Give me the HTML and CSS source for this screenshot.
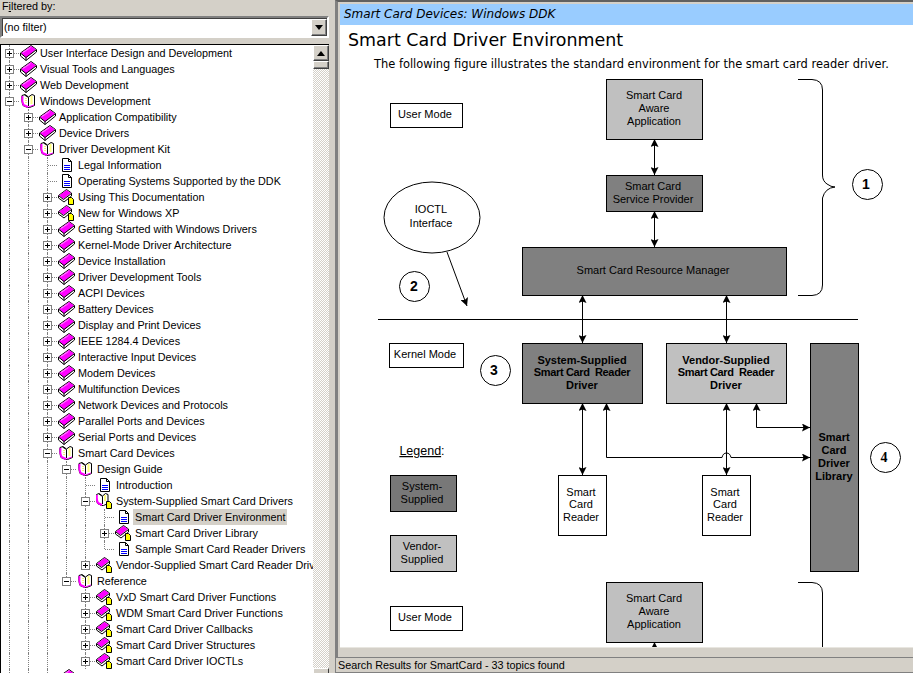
FILE: index.html
```html
<!DOCTYPE html>
<html lang="en">
<head>
<meta charset="utf-8">
<title>Smart Card Driver Environment</title>
<link rel="stylesheet" href="styles.css">
</head>
<body>
<svg class="defs" width="0" height="0" aria-hidden="true">
  <symbol id="book" viewBox="0 0 17 16">
    <path d="M0.500 8 11 0.500 16.500 4.500V7L6 15.500 0.500 11z" fill="#fff" stroke="#000"/>
    <path d="M1 8 11 1l5 3.500L6 13z" fill="#f0f"/>
    <path d="M1 8.500 6 12.500 16 5M6 12.500v3" fill="none" stroke="#000"/>
    <path d="M3 7.500 10.500 2.500" stroke="#ff8cff"/>
  </symbol>
  <symbol id="bookp" viewBox="0 0 17 16">
    <path d="M0.500 6.500 8.500 0.500 13.500 4V7L6 13 0.500 9z" fill="#fff" stroke="#000"/>
    <path d="M1 6.500 8.500 1 13 4 5.500 10z" fill="#f0f"/>
    <path d="M1 7 5.500 10.500 13.500 4.500" fill="none" stroke="#000"/>
    <path d="M10.500 8.500h3l2 2v5h-5z" fill="#ff0" stroke="#000"/>
  </symbol>
  <symbol id="open" viewBox="0 0 17 16">
    <path d="M2 2.500C1.500 6 2 10 3 12.500L7.500 14.500H9.500L14.500 12.500V2.500L12 1.500 8.500 4 5 1.500z" fill="#fff" stroke="#000"/>
    <path d="M2.500 3C2 6 2.500 10 3.500 12L8 14" fill="none" stroke="#f0f" stroke-width="2"/>
    <path d="M8.500 14 14 12" fill="none" stroke="#f0f"/>
    <path d="M4.500 2 8.500 4.500V13" fill="none" stroke="#000"/>
    <path d="M11.500 3.500v8" stroke="#ff0" stroke-width="2" stroke-dasharray="1 1"/>
    <path d="M6 5v6" stroke="#e8e800" stroke-dasharray="1 1"/>
  </symbol>
  <symbol id="openp" viewBox="0 0 17 16">
    <path d="M0.500 1.500C0 5 0.500 8 1.500 10.500L5.500 12.500H7.500L12 10.500V1.500L9.500 0.500 6.500 3 3 0.500z" fill="#fff" stroke="#000"/>
    <path d="M1 2C0.500 5 1 8 2 10L6 12" fill="none" stroke="#f0f" stroke-width="2"/>
    <path d="M3 1 6.500 3.500V11" fill="none" stroke="#000"/>
    <path d="M9 2.500v6" stroke="#ff0" stroke-width="2" stroke-dasharray="1 1"/>
    <path d="M10.500 8.500h3l2 2v5h-5z" fill="#ff0" stroke="#000"/>
  </symbol>
  <symbol id="doc" viewBox="0 0 17 16">
    <path d="M4.500 1.500h6l3 3v10h-9z" fill="#fff" stroke="#000"/>
    <path d="M10.500 1.500v3h3" fill="none" stroke="#000"/>
    <path d="M6 8.500h6M6 10.500h6M6 12.500h6" stroke="#00f"/>
  </symbol>
  <marker id="a" viewBox="0 0 8 8" refX="8" refY="4" markerWidth="8" markerHeight="8" markerUnits="userSpaceOnUse" orient="auto-start-reverse">
    <path d="M0 0 8 4 0 8 1.500 4z"/>
  </marker>
</svg>

<div class="app">
  <aside class="side">
    <div class="filter-label">F<u>i</u>ltered by:</div>
    <div class="combo">
      <span class="combo-value">(no filter)</span>
      <span class="btn combo-btn"><span class="tri-down"></span></span>
    </div>
    <div class="tree-panel">
      <ul class="tree">
        <li class="row"><span class="c t"><span class="box plus"></span></span><svg class="ic"><use href="#book"/></svg><span class="lb">User Interface Design and Development</span></li>
        <li class="row"><span class="c t"><span class="box plus"></span></span><svg class="ic"><use href="#book"/></svg><span class="lb">Visual Tools and Languages</span></li>
        <li class="row"><span class="c t"><span class="box plus"></span></span><svg class="ic"><use href="#book"/></svg><span class="lb">Web Development</span></li>
        <li class="row"><span class="c t"><span class="box minus"></span></span><svg class="ic"><use href="#open"/></svg><span class="lb">Windows Development</span></li>
        <li class="row"><span class="c g"></span><span class="c t"><span class="box plus"></span></span><svg class="ic"><use href="#book"/></svg><span class="lb">Application Compatibility</span></li>
        <li class="row"><span class="c g"></span><span class="c t"><span class="box plus"></span></span><svg class="ic"><use href="#book"/></svg><span class="lb">Device Drivers</span></li>
        <li class="row"><span class="c g"></span><span class="c t"><span class="box minus"></span></span><svg class="ic"><use href="#open"/></svg><span class="lb">Driver Development Kit</span></li>
        <li class="row"><span class="c g"></span><span class="c g"></span><span class="c t"></span><svg class="ic"><use href="#doc"/></svg><span class="lb">Legal Information</span></li>
        <li class="row"><span class="c g"></span><span class="c g"></span><span class="c t"></span><svg class="ic"><use href="#doc"/></svg><span class="lb">Operating Systems Supported by the DDK</span></li>
        <li class="row"><span class="c g"></span><span class="c g"></span><span class="c t"><span class="box plus"></span></span><svg class="ic"><use href="#bookp"/></svg><span class="lb">Using This Documentation</span></li>
        <li class="row"><span class="c g"></span><span class="c g"></span><span class="c t"><span class="box plus"></span></span><svg class="ic"><use href="#bookp"/></svg><span class="lb">New for Windows XP</span></li>
        <li class="row"><span class="c g"></span><span class="c g"></span><span class="c t"><span class="box plus"></span></span><svg class="ic"><use href="#book"/></svg><span class="lb">Getting Started with Windows Drivers</span></li>
        <li class="row"><span class="c g"></span><span class="c g"></span><span class="c t"><span class="box plus"></span></span><svg class="ic"><use href="#book"/></svg><span class="lb">Kernel-Mode Driver Architecture</span></li>
        <li class="row"><span class="c g"></span><span class="c g"></span><span class="c t"><span class="box plus"></span></span><svg class="ic"><use href="#book"/></svg><span class="lb">Device Installation</span></li>
        <li class="row"><span class="c g"></span><span class="c g"></span><span class="c t"><span class="box plus"></span></span><svg class="ic"><use href="#book"/></svg><span class="lb">Driver Development Tools</span></li>
        <li class="row"><span class="c g"></span><span class="c g"></span><span class="c t"><span class="box plus"></span></span><svg class="ic"><use href="#book"/></svg><span class="lb">ACPI Devices</span></li>
        <li class="row"><span class="c g"></span><span class="c g"></span><span class="c t"><span class="box plus"></span></span><svg class="ic"><use href="#book"/></svg><span class="lb">Battery Devices</span></li>
        <li class="row"><span class="c g"></span><span class="c g"></span><span class="c t"><span class="box plus"></span></span><svg class="ic"><use href="#book"/></svg><span class="lb">Display and Print Devices</span></li>
        <li class="row"><span class="c g"></span><span class="c g"></span><span class="c t"><span class="box plus"></span></span><svg class="ic"><use href="#book"/></svg><span class="lb">IEEE 1284.4 Devices</span></li>
        <li class="row"><span class="c g"></span><span class="c g"></span><span class="c t"><span class="box plus"></span></span><svg class="ic"><use href="#book"/></svg><span class="lb">Interactive Input Devices</span></li>
        <li class="row"><span class="c g"></span><span class="c g"></span><span class="c t"><span class="box plus"></span></span><svg class="ic"><use href="#book"/></svg><span class="lb">Modem Devices</span></li>
        <li class="row"><span class="c g"></span><span class="c g"></span><span class="c t"><span class="box plus"></span></span><svg class="ic"><use href="#book"/></svg><span class="lb">Multifunction Devices</span></li>
        <li class="row"><span class="c g"></span><span class="c g"></span><span class="c t"><span class="box plus"></span></span><svg class="ic"><use href="#book"/></svg><span class="lb">Network Devices and Protocols</span></li>
        <li class="row"><span class="c g"></span><span class="c g"></span><span class="c t"><span class="box plus"></span></span><svg class="ic"><use href="#book"/></svg><span class="lb">Parallel Ports and Devices</span></li>
        <li class="row"><span class="c g"></span><span class="c g"></span><span class="c t"><span class="box plus"></span></span><svg class="ic"><use href="#book"/></svg><span class="lb">Serial Ports and Devices</span></li>
        <li class="row"><span class="c g"></span><span class="c g"></span><span class="c t"><span class="box minus"></span></span><svg class="ic"><use href="#open"/></svg><span class="lb">Smart Card Devices</span></li>
        <li class="row"><span class="c g"></span><span class="c g"></span><span class="c g"></span><span class="c t"><span class="box minus"></span></span><svg class="ic"><use href="#open"/></svg><span class="lb">Design Guide</span></li>
        <li class="row"><span class="c g"></span><span class="c g"></span><span class="c g"></span><span class="c g"></span><span class="c t"></span><svg class="ic"><use href="#doc"/></svg><span class="lb">Introduction</span></li>
        <li class="row"><span class="c g"></span><span class="c g"></span><span class="c g"></span><span class="c g"></span><span class="c t"><span class="box minus"></span></span><svg class="ic"><use href="#openp"/></svg><span class="lb">System-Supplied Smart Card Drivers</span></li>
        <li class="row"><span class="c g"></span><span class="c g"></span><span class="c g"></span><span class="c g"></span><span class="c g"></span><span class="c t"></span><svg class="ic"><use href="#doc"/></svg><span class="lb sel">Smart Card Driver Environment</span></li>
        <li class="row"><span class="c g"></span><span class="c g"></span><span class="c g"></span><span class="c g"></span><span class="c g"></span><span class="c t"><span class="box plus"></span></span><svg class="ic"><use href="#bookp"/></svg><span class="lb">Smart Card Driver Library</span></li>
        <li class="row"><span class="c g"></span><span class="c g"></span><span class="c g"></span><span class="c g"></span><span class="c g"></span><span class="c l"></span><svg class="ic"><use href="#doc"/></svg><span class="lb">Sample Smart Card Reader Drivers</span></li>
        <li class="row"><span class="c g"></span><span class="c g"></span><span class="c g"></span><span class="c g"></span><span class="c l"><span class="box plus"></span></span><svg class="ic"><use href="#bookp"/></svg><span class="lb">Vendor-Supplied Smart Card Reader Drivers</span></li>
        <li class="row"><span class="c g"></span><span class="c g"></span><span class="c g"></span><span class="c l"><span class="box minus"></span></span><svg class="ic"><use href="#open"/></svg><span class="lb">Reference</span></li>
        <li class="row"><span class="c g"></span><span class="c g"></span><span class="c g"></span><span class="c"></span><span class="c t"><span class="box plus"></span></span><svg class="ic"><use href="#bookp"/></svg><span class="lb">VxD Smart Card Driver Functions</span></li>
        <li class="row"><span class="c g"></span><span class="c g"></span><span class="c g"></span><span class="c"></span><span class="c t"><span class="box plus"></span></span><svg class="ic"><use href="#bookp"/></svg><span class="lb">WDM Smart Card Driver Functions</span></li>
        <li class="row"><span class="c g"></span><span class="c g"></span><span class="c g"></span><span class="c"></span><span class="c t"><span class="box plus"></span></span><svg class="ic"><use href="#bookp"/></svg><span class="lb">Smart Card Driver Callbacks</span></li>
        <li class="row"><span class="c g"></span><span class="c g"></span><span class="c g"></span><span class="c"></span><span class="c t"><span class="box plus"></span></span><svg class="ic"><use href="#bookp"/></svg><span class="lb">Smart Card Driver Structures</span></li>
        <li class="row"><span class="c g"></span><span class="c g"></span><span class="c g"></span><span class="c"></span><span class="c t"><span class="box plus"></span></span><svg class="ic"><use href="#bookp"/></svg><span class="lb">Smart Card Driver IOCTLs</span></li>
        <li class="row"><span class="c g"></span><span class="c g"></span><span class="c t"><span class="box plus"></span></span><svg class="ic"><use href="#book"/></svg><span class="lb">Still Image Devices</span></li>
      </ul>
      <div class="scrollbar">
        <span class="btn sb-up"><span class="tri-up"></span></span>
        <span class="btn sb-thumb"></span>
        <span class="sb-track"></span>
        <span class="btn sb-down"></span>
      </div>
    </div>
  </aside>

  <main class="main">
    <div class="frame">
      <div class="pane">
        <div class="banner">Smart Card Devices: Windows DDK</div>
        <h1 class="title">Smart Card Driver Environment</h1>
        <p class="intro">The following figure illustrates the standard environment for the smart card reader driver.</p>
        <svg class="diagram" viewBox="370 75 543 572" width="543" height="572">
          <g class="lines">
            <line x1="654.500" y1="139" x2="654.500" y2="175" marker-start="url(#a)" marker-end="url(#a)"/>
            <line x1="654.500" y1="211" x2="654.500" y2="247" marker-start="url(#a)" marker-end="url(#a)"/>
            <line x1="582.500" y1="295" x2="582.500" y2="343" marker-start="url(#a)" marker-end="url(#a)"/>
            <line x1="726.500" y1="295" x2="726.500" y2="343" marker-start="url(#a)" marker-end="url(#a)"/>
            <line x1="582.500" y1="403" x2="582.500" y2="475" marker-start="url(#a)" marker-end="url(#a)"/>
            <line x1="726.500" y1="403" x2="726.500" y2="475" marker-start="url(#a)" marker-end="url(#a)"/>
            <path d="M606.500 403V457.500H722Q723 453 726.500 453T731 457.500H810" marker-start="url(#a)" marker-end="url(#a)"/>
            <path d="M756.500 403V427.500H810" marker-start="url(#a)" marker-end="url(#a)"/>
            <line x1="654.500" y1="642" x2="654.500" y2="660" marker-start="url(#a)"/>
            <line x1="447" y1="252" x2="467" y2="306" marker-end="url(#a)"/>
            <line x1="378" y1="319.500" x2="858" y2="319.500"/>
            <path d="M798 79.500H812Q822.500 80 822.500 90V175Q822.500 181 827 184Q831 187 835 187Q825 188 822.500 198V285Q822.500 295 812 295.500H798"/>
            <path d="M798 582.500H812Q822.500 583 822.500 593V660"/>
          </g>
          <g class="shapes">
            <rect class="white" x="390.500" y="103.500" width="72" height="24"/>
            <rect class="light" x="606.500" y="79.500" width="96" height="60"/>
            <rect class="dark" x="606.500" y="175.500" width="96" height="36"/>
            <rect class="dark" x="522.500" y="247.500" width="264" height="48"/>
            <rect class="white" x="389.500" y="343.500" width="74" height="24"/>
            <rect class="dark" x="522.500" y="343.500" width="120" height="60"/>
            <rect class="light" x="666.500" y="343.500" width="120" height="60"/>
            <rect class="dark" x="810.500" y="343.500" width="48" height="228"/>
            <rect class="white" x="558.500" y="475.500" width="48" height="60"/>
            <rect class="white" x="702.500" y="475.500" width="48" height="60"/>
            <rect class="legend-dark" x="390.500" y="475.500" width="66" height="36"/>
            <rect class="light" x="390.500" y="535.500" width="66" height="36"/>
            <rect class="white" x="390.500" y="606.500" width="72" height="24"/>
            <rect class="light" x="606.500" y="582.500" width="96" height="60"/>
            <ellipse class="white" cx="432" cy="217.500" rx="48" ry="35.500"/>
            <circle class="white" cx="414.500" cy="286.500" r="15"/>
            <circle class="white" cx="495.500" cy="370.500" r="15"/>
            <circle class="white" cx="867.500" cy="184.500" r="15"/>
            <circle class="white" cx="885.500" cy="457.500" r="15"/>
          </g>
          <g class="labels">
            <text x="425" y="118">User Mode</text>
            <text x="654" y="99">Smart Card</text>
            <text x="654" y="112">Aware</text>
            <text x="654" y="125">Application</text>
            <text x="653" y="190">Smart Card</text>
            <text x="653" y="203">Service Provider</text>
            <text x="653" y="274">Smart Card Resource Manager</text>
            <text x="431" y="213">IOCTL</text>
            <text x="431" y="227">Interface</text>
            <text x="425" y="358">Kernel Mode</text>
            <text class="b" x="582" y="364">System-Supplied</text>
            <text class="b tight" x="582" y="376">Smart Card  Reader</text>
            <text class="b" x="582" y="389">Driver</text>
            <text class="b" x="726" y="364">Vendor-Supplied</text>
            <text class="b tight" x="726" y="376">Smart Card  Reader</text>
            <text class="b" x="726" y="389">Driver</text>
            <text class="b" x="834" y="441">Smart</text>
            <text class="b" x="834" y="454">Card</text>
            <text class="b" x="834" y="467">Driver</text>
            <text class="b" x="834" y="480">Library</text>
            <text x="581" y="496">Smart</text>
            <text x="581" y="508">Card</text>
            <text x="581" y="521">Reader</text>
            <text x="725" y="496">Smart</text>
            <text x="725" y="508">Card</text>
            <text x="725" y="521">Reader</text>
            <text class="legend" x="422" y="455"><tspan class="u">Legend</tspan>:</text>
            <text x="422" y="490">System-</text>
            <text x="422" y="503">Supplied</text>
            <text x="422" y="550">Vendor-</text>
            <text x="422" y="563">Supplied</text>
            <text x="425" y="621">User Mode</text>
            <text x="654" y="602">Smart Card</text>
            <text x="654" y="615">Aware</text>
            <text x="654" y="628">Application</text>
            <text class="n" x="414" y="291">2</text>
            <text class="n" x="494" y="375">3</text>
            <text class="n" x="866" y="189">1</text>
            <text class="n s" x="884" y="462">4</text>
          </g>
        </svg>
      </div>
    </div>
    <div class="status">Search Results for SmartCard - 33 topics found</div>
  </main>
</div>
</body>
</html>
```
FILE: styles.css
```css
html, body { margin: 0; padding: 0; height: 100%; overflow: hidden; }
body { background: #d4d0c8; font: 10.800px/16px "Liberation Sans", Arial, sans-serif; color: #000; }
.defs { position: absolute; }
.app { display: flex; height: 673px; overflow: hidden; }

/* Left panel */
.side { width: 335px; flex: none; padding-right: 6px; box-sizing: border-box; display: flex; flex-direction: column; }
.filter-label { height: 16px; line-height: 12px; padding-left: 2px; }
.combo { height: 22px; box-sizing: border-box; display: flex; align-items: center; background: #fff; border: 2px solid; border-color: #808080 #fff #fff #808080; box-shadow: inset 1px 1px 0 #404040; }
.combo-value { flex: 1; padding-left: 2px; }
.btn { display: flex; align-items: center; justify-content: center; box-sizing: border-box; background: #d4d0c8; border: 1px solid; border-color: #fff #404040 #404040 #fff; box-shadow: inset -1px -1px 0 #808080; }
.combo-btn { width: 16px; height: 17px; flex: none; }
.tri-down { border: 4px solid transparent; border-top: 5px solid #000; border-bottom: 0; }
.tri-up { border: 4px solid transparent; border-bottom: 5px solid #000; border-top: 0; }

.tree-panel { margin-top: 6px; flex: 1; min-height: 0; display: flex; background: #fff; border-top: 1px solid #000; border-left: 1px solid #000; }
.tree { flex: 1; min-width: 0; margin: 0 0 0 -1px; padding: 0; list-style: none; overflow: hidden; }
.row { display: flex; height: 16px; white-space: nowrap; }
.c { position: relative; width: 19px; height: 16px; flex: none; }
.g::before, .t::before, .l::before { content: ""; position: absolute; left: 9px; top: 0; bottom: 0; border-left: 1px dotted #808080; }
.l::before { bottom: 8px; }
.t::after, .l::after { content: ""; position: absolute; left: 10px; top: 8px; width: 9px; border-top: 1px dotted #808080; }
.box { position: absolute; z-index: 1; left: 5px; top: 4px; width: 9px; height: 9px; box-sizing: border-box; border: 1px solid #808080; background-color: #fff; background-repeat: no-repeat; background-position: center; }
.plus { background-image: linear-gradient(#000, #000), linear-gradient(#000, #000); background-size: 5px 1px, 1px 5px; }
.minus { background-image: linear-gradient(#000, #000); background-size: 5px 1px; }
.ic { width: 17px; height: 16px; flex: none; margin-left: 1px; }
.lb { margin-left: 2px; padding: 0 1px; flex: none; }
.sel { background: #d4d0c8; margin-left: 1px; padding: 0 1px 0 2px; }

.scrollbar { width: 16px; flex: none; display: flex; flex-direction: column; }
.sb-up { height: 16px; flex: none; }
.sb-thumb { height: 8px; flex: none; }
.sb-track { flex: 1; background: repeating-conic-gradient(#d4d0c8 0 25%, #fff 0 50%) 0 0 / 2px 2px; }
.sb-down { height: 5px; flex: none; border-bottom: 0; box-shadow: none; }

/* Right panel */
.main { flex: 1; min-width: 0; display: flex; flex-direction: column; }
.frame { height: 657px; box-sizing: border-box; padding: 2px 0 9px 2px; border-top: 2px solid #606060; border-left: 3px solid #808080; }
.pane { height: 100%; background: #fff; overflow: hidden; border-bottom: 1px solid #e8e6e0; box-sizing: border-box; }
.banner { height: 21px; padding-left: 4px; background: #99ccff; font: italic 12px/21px "DejaVu Sans", Verdana, sans-serif; }
.title { margin: 5px 0 0 8px; font: 400 17.450px/20px "DejaVu Sans", Verdana, sans-serif; }
.intro { margin: 7px 0 0 34px; font: 11.450px/14px "DejaVu Sans", Verdana, sans-serif; white-space: nowrap; }
.diagram { display: block; margin: 4px 0 0 30px; }
.status { flex: 1; box-sizing: border-box; padding-left: 2px; line-height: 14px; border-top: 1px solid #808080; border-left: 1px solid #808080; border-bottom: 1px solid #808080; }

/* Diagram */
.lines { fill: none; stroke: #000; stroke-width: 1px; }
.shapes { stroke: #000; stroke-width: 1px; }
.white { fill: #fff; }
.light { fill: #c0c0c0; }
.dark { fill: #808080; }
.legend-dark { fill: #787878; }
.labels text { font: 11px "Liberation Sans", Arial, sans-serif; text-anchor: middle; fill: #000; }
.labels .b { font-weight: 700; white-space: pre; }
.labels .tight { letter-spacing: -0.350px; }
.labels .legend { font-size: 12.500px; }
.labels .u { text-decoration: underline; }
.labels .n { font-size: 14px; font-weight: 700; }
.labels .s { font-family: "Liberation Serif", serif; }
marker path { stroke: none; fill: #000; }
```
